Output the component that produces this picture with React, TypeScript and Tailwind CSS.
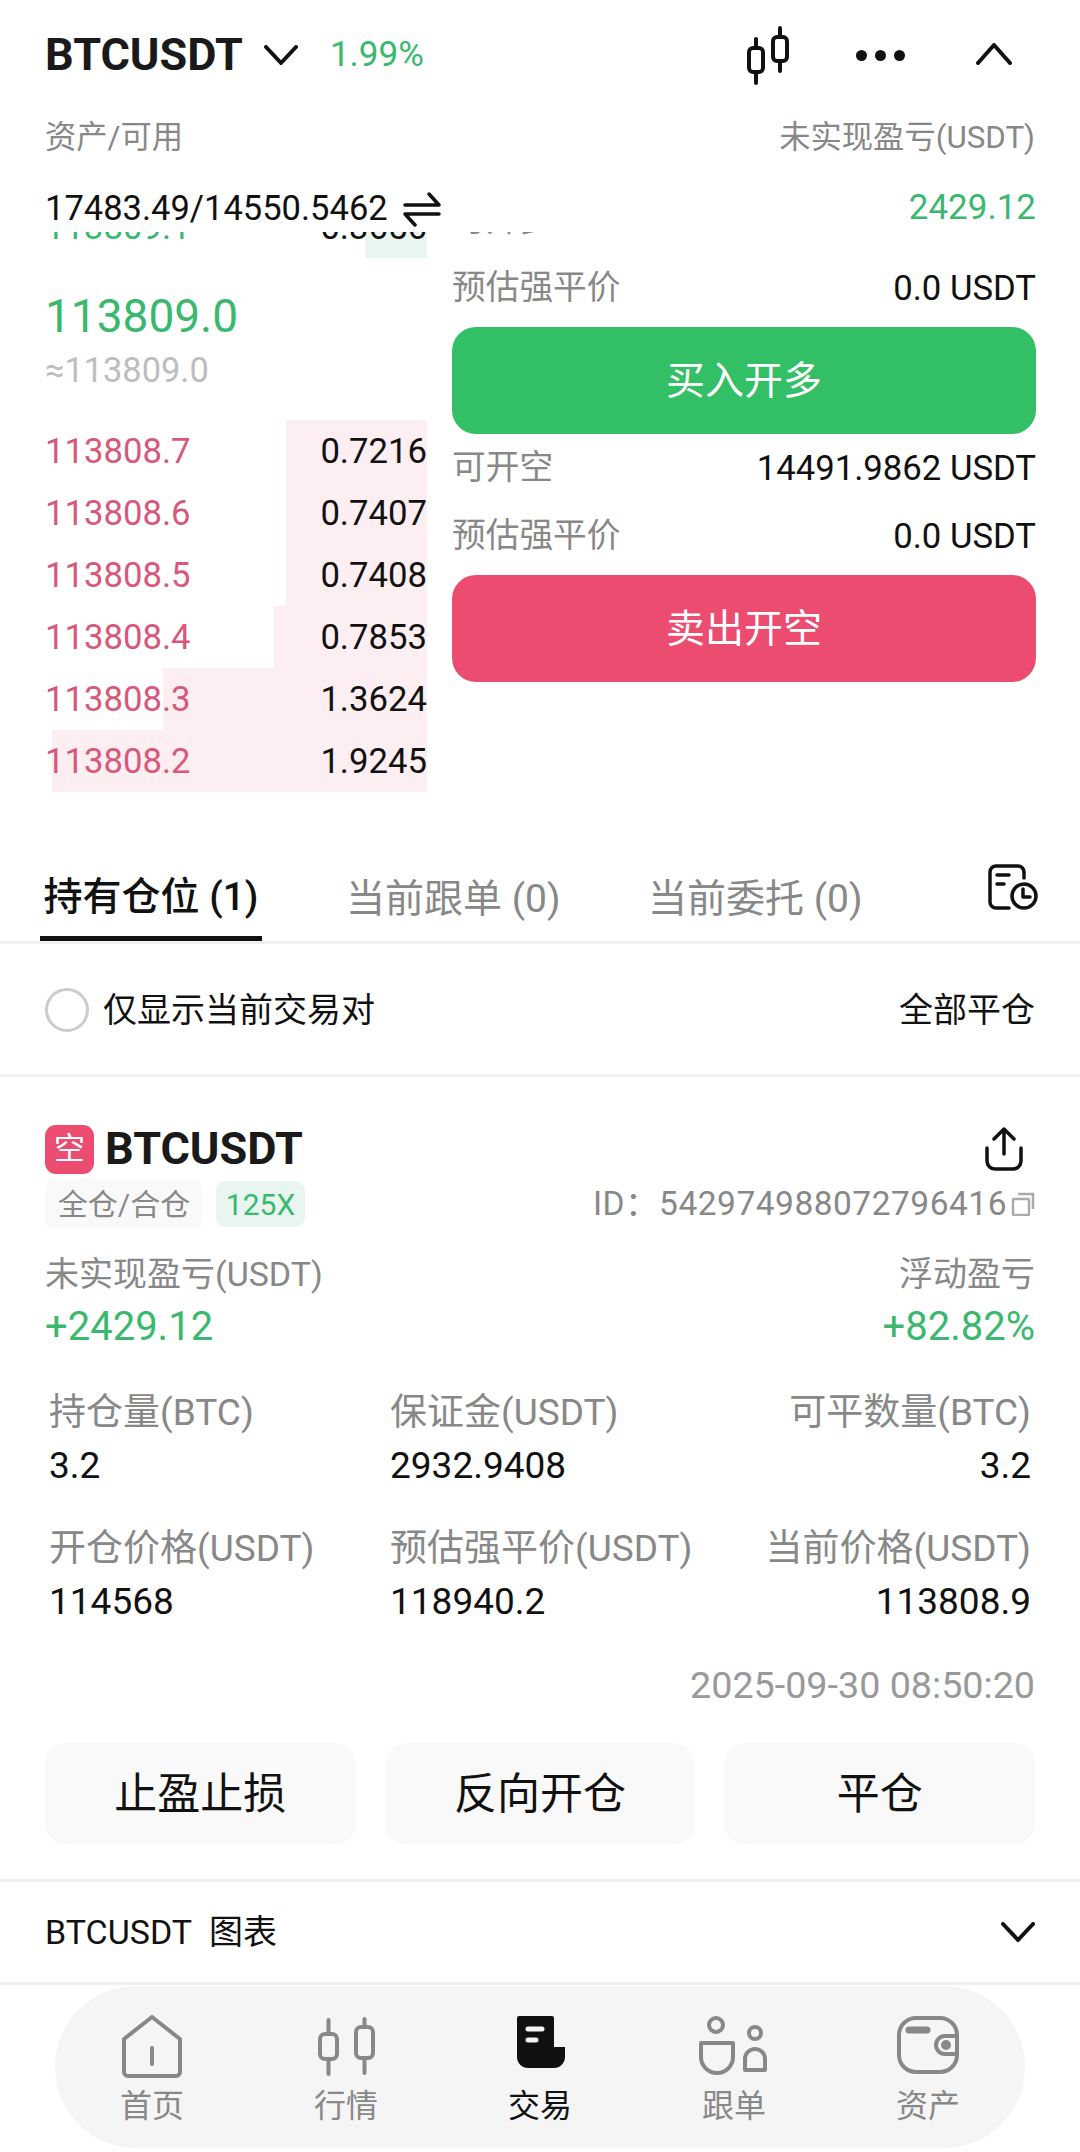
const asks = [
  { price: '113808.7', size: '0.7216', bar: 141 },
  { price: '113808.6', size: '0.7407', bar: 141 },
  { price: '113808.5', size: '0.7408', bar: 141 },
  { price: '113808.4', size: '0.7853', bar: 153 },
  { price: '113808.3', size: '1.3624', bar: 264 },
  { price: '113808.2', size: '1.9245', bar: 375 },
];

const stats = [
  { label: '持仓量(BTC)', value: '3.2' },
  { label: '保证金(USDT)', value: '2932.9408' },
  { label: '可平数量(BTC)', value: '3.2', right: true },
  { label: '开仓价格(USDT)', value: '114568' },
  { label: '预估强平价(USDT)', value: '118940.2' },
  { label: '当前价格(USDT)', value: '113808.9', right: true },
];

function Candles() {
  return (
    <svg width="46" height="60" viewBox="0 0 46 60" fill="none" stroke="#111" strokeWidth="4" strokeLinecap="round">
      <rect x="4" y="23" width="14" height="24" rx="4" />
      <path d="M11 14v9M11 47v11" />
      <rect x="28" y="12" width="14" height="24" rx="4" />
      <path d="M35 3v9M35 36v10" />
    </svg>
  );
}

function NavHome() {
  return (
    <svg width="62" height="64" viewBox="0 0 62 64" fill="none" stroke="#888" strokeWidth="4" strokeLinejoin="round" strokeLinecap="round">
      <path d="M3 24 L31 2 L59 24 V57 a4 4 0 0 1-4 4 H7 a4 4 0 0 1-4-4 Z" />
      <path d="M31 33v16" />
    </svg>
  );
}

function NavCandles() {
  return (
    <svg width="62" height="64" viewBox="0 0 62 64" fill="none" stroke="#888" strokeWidth="4" strokeLinecap="round">
      <rect x="5" y="19" width="17" height="25" rx="5" />
      <path d="M13.5 5v14M13.5 44v15" />
      <rect x="41" y="12" width="17" height="31" rx="5" />
      <path d="M49.5 4v8M49.5 43v15" />
    </svg>
  );
}

function NavTrade() {
  return (
    <svg width="52" height="54" viewBox="0 0 52 54" fill="none">
      <path d="M3 3 a2 2 0 0 1 2-2 H38 a2 2 0 0 1 2 2 V32 H51 V42 a11 11 0 0 1-11 11 H14 a11 11 0 0 1-11-11 Z" fill="#111" />
      <path d="M14 14h14M14 25h8" stroke="#f5f5f5" strokeWidth="5" strokeLinecap="round" />
    </svg>
  );
}

function NavFollow() {
  return (
    <svg width="72" height="62" viewBox="0 0 72 62" fill="none" stroke="#888" strokeWidth="4">
      <circle cx="18" cy="10" r="7" />
      <path d="M3 28 H35 V42 a16 16 0 0 1-32 0 Z" strokeLinejoin="round" />
      <circle cx="57" cy="18" r="6" />
      <path d="M47 55 V44 a10 10 0 0 1 20 0 V55 Z" strokeLinejoin="round" />
    </svg>
  );
}

function NavWallet() {
  return (
    <svg width="64" height="60" viewBox="0 0 64 60" fill="none" stroke="#888" strokeWidth="4">
      <rect x="3" y="3" width="58" height="54" rx="17" />
      <path d="M13 15h18" strokeWidth="7" strokeLinecap="round" />
      <path d="M61 21 H49 a9 9 0 0 0 0 18 H61" />
      <circle cx="50" cy="30" r="3" fill="#888" />
    </svg>
  );
}

const nav = [
  { label: '首页', icon: <NavHome /> },
  { label: '行情', icon: <NavCandles /> },
  { label: '交易', icon: <NavTrade />, active: true },
  { label: '跟单', icon: <NavFollow /> },
  { label: '资产', icon: <NavWallet /> },
];

function InfoRow({ label, value }: { label: string; value?: string }) {
  return (
    <div className="flex h-[68px] items-center justify-between">
      <span className="text-[33.7px] text-[#888888]">{label}</span>
      {value && <span className="text-[34.7px] text-[#111111]">{value}</span>}
    </div>
  );
}

export default function App() {
  return (
    <div className="h-[2152px] w-[1080px] overflow-hidden bg-white text-[#111111] [font-family:Roboto,'Noto_Sans_CJK_SC',sans-serif]">
      {/* header */}
      <div className="flex h-[110px] items-center pl-[45px]">
        <span className="text-[45px] font-bold text-[#1a1a1a]">BTCUSDT</span>
        <svg className="ml-[21px]" width="34" height="20" viewBox="0 0 34 20" fill="none" stroke="#111" strokeWidth="4" strokeLinecap="round" strokeLinejoin="round">
          <path d="M2 2 L17 18 L32 2" />
        </svg>
        <span className="ml-[32px] text-[35px] text-[#3ab86e]">1.99%</span>
        <div className="ml-auto mr-[68px] flex items-center">
          <Candles />
          <div className="ml-[65px] flex gap-[8px]">
            <span className="size-[11px] rounded-full bg-[#111111]" />
            <span className="size-[11px] rounded-full bg-[#111111]" />
            <span className="size-[11px] rounded-full bg-[#111111]" />
          </div>
          <svg className="ml-[71px] mt-[-2px]" width="36" height="22" viewBox="0 0 36 22" fill="none" stroke="#111" strokeWidth="4" strokeLinecap="round" strokeLinejoin="round">
            <path d="M2 20 L18 2 L34 20" />
          </svg>
        </div>
      </div>

      <div className="flex h-[56px] items-center justify-between px-[45px] text-[31.3px] text-[#888888]">
        <span>资产/可用</span>
        <span>未实现盈亏(USDT)</span>
      </div>
      <div className="mt-[12px] flex h-[54px] items-start justify-between pl-[45px] pr-[44px] leading-[60px]">
        <div className="flex items-center text-[34.5px]">
          <span>17483.49/14550.5462</span>
          <svg className="ml-[15px] mt-[2px]" width="38" height="36" viewBox="0 0 38 36" fill="none" stroke="#111" strokeWidth="3.5" strokeLinecap="round" strokeLinejoin="round">
            <path d="M2 14 H36 L26 3" />
            <path d="M36 23 H2 L12 34" />
          </svg>
        </div>
        <span className="text-[35px] text-[#3ab86e]">2429.12</span>
      </div>

      {/* order book and order form, scrolled under the header */}
      <div className="flex h-[586px] overflow-hidden pl-[45px] pr-[44px]">
        <div className="-mt-[36px] w-[382px] shrink-0">
          <div className="relative flex h-[62px] items-center justify-between text-[34.7px]">
            <div className="absolute inset-y-0 right-0 w-[62px] bg-[#e8f6ef]" />
            <span className="relative text-[#3ab86e]">113809.1</span>
            <span className="relative">0.3656</span>
          </div>
          <div className="flex h-[162px] flex-col pt-[28px]">
            <div className="flex h-[60px] items-center text-[46px] text-[#3ab86e]">113809.0</div>
            <div className="flex h-[50px] items-center text-[34.4px] text-[#bdbdbd]">≈113809.0</div>
          </div>
          {asks.map((row) => (
            <div key={row.price} className="relative flex h-[62px] items-center justify-between text-[34.7px]">
              <div className="absolute inset-y-0 right-0 bg-[#fdeef1]" style={{ width: row.bar }} />
              <span className="relative text-[#d8587c]">{row.price}</span>
              <span className="relative">{row.size}</span>
            </div>
          ))}
        </div>

        <div className="-mt-[46px] ml-[25px] flex-1">
          <InfoRow label="可开多" />
          <InfoRow label="预估强平价" value="0.0 USDT" />
          <button className="mt-[5px] flex h-[107px] w-full items-center justify-center rounded-[24px] bg-[#33bf66] pt-[2px] text-[39px] text-white">
            买入开多
          </button>
          <InfoRow label="可开空" value="14491.9862 USDT" />
          <InfoRow label="预估强平价" value="0.0 USDT" />
          <button className="mt-[5px] flex h-[107px] w-full items-center justify-center rounded-[24px] bg-[#ec4c70] pt-[2px] text-[39px] text-white">
            卖出开空
          </button>
        </div>
      </div>

      {/* tabs */}
      <div className="mt-[40px] flex h-[86px] items-start border-b-[3px] border-[#f0f0f0] pl-[40px]">
        <div className="w-[306px]">
          <div className="flex h-[83px] w-[222px] items-center justify-center border-b-[5px] border-[#111111] text-[39px] font-medium">
            持有仓位 (1)
          </div>
        </div>
        <div className="flex h-[83px] w-[302px] items-center text-[39px] text-[#888888]">当前跟单 (0)</div>
        <div className="flex h-[83px] items-center text-[39px] text-[#888888]">当前委托 (0)</div>
        <svg className="ml-auto mr-[42px] mt-[6px]" width="50" height="46" viewBox="0 0 50 46" fill="none" stroke="#111" strokeWidth="3.5" strokeLinecap="round" strokeLinejoin="round">
          <path d="M36 14 V8 a6 6 0 0 0-6-6 H8 a6 6 0 0 0-6 6 V38 a6 6 0 0 0 6 6 H21" />
          <path d="M9 11h12M9 20h7" />
          <circle cx="36" cy="32" r="12" />
          <path d="M35 25v8h7" />
        </svg>
      </div>

      <div className="flex h-[133px] items-center justify-between border-b-[3px] border-[#f0f0f0] px-[45px] pt-[2px]">
        <div className="flex items-center">
          <span className="size-[44px] rounded-full border-[3px] border-[#cccccc]" />
          <span className="ml-[14px] text-[34px]">仅显示当前交易对</span>
        </div>
        <span className="text-[34px]">全部平仓</span>
      </div>

      {/* position card */}
      <div className="px-[45px] pt-[47px]">
        <div className="flex h-[50px] items-center justify-between">
          <div className="flex items-center">
            <span className="flex size-[49px] items-center justify-center rounded-[11px] bg-[#ec4c70] text-[31px] text-white">空</span>
            <span className="ml-[11px] text-[45px] font-bold text-[#1a1a1a]">BTCUSDT</span>
          </div>
          <svg className="mr-[12px]" width="38" height="44" viewBox="0 0 38 44" fill="none" stroke="#111" strokeWidth="3.5" strokeLinecap="round" strokeLinejoin="round">
            <path d="M19 27 V3 M9 12 L19 2 L29 12" />
            <path d="M2 21 V34 a8 8 0 0 0 8 8 H28 a8 8 0 0 0 8-8 V21" />
          </svg>
        </div>
        <div className="mt-[5px] flex h-[50px] items-center">
          <span className="flex h-[50px] w-[158px] items-center justify-center rounded-[10px] bg-[#f9f9f9] text-[30px] text-[#888888]">全仓/合仓</span>
          <span className="ml-[13px] flex h-[46px] w-[89px] items-center justify-center rounded-[10px] bg-[#e8f6ef] text-[30px] text-[#3ab86e]">125X</span>
          <span className="ml-auto text-[33.5px] tracking-[0.5px] text-[#888888]">ID：542974988072796416</span>
          <svg className="ml-[4px]" width="24" height="24" viewBox="0 0 24 24" fill="none" stroke="#aaa" strokeWidth="2.5">
            <rect x="2" y="7" width="16" height="16" rx="1" />
            <path d="M7 2 H22 V17" />
          </svg>
        </div>

        <div className="mt-[20px] flex justify-between">
          <div>
            <div className="flex h-[50px] items-center text-[34px] text-[#888888]">未实现盈亏(USDT)</div>
            <div className="mt-[2px] flex h-[52px] items-center text-[40px] text-[#3ab86e]">+2429.12</div>
          </div>
          <div className="text-right">
            <div className="flex h-[50px] items-center justify-end text-[34px] text-[#888888]">浮动盈亏</div>
            <div className="mt-[2px] flex h-[52px] items-center justify-end text-[40px] text-[#3ab86e]">+82.82%</div>
          </div>
        </div>

        <div className="mt-[35px] grid grid-cols-[341px_1fr_1fr] gap-y-[33px] px-[4px]">
          {stats.map((stat) => (
            <div key={stat.label} className={stat.right ? 'text-right' : ''}>
              <div className="h-[50px] whitespace-nowrap text-[37px] leading-[50px] text-[#888888]">{stat.label}</div>
              <div className="mt-[3px] h-[50px] text-[37px] leading-[50px]">{stat.value}</div>
            </div>
          ))}
        </div>

        <div className="mt-[33px] h-[50px] text-right text-[37.7px] leading-[50px] text-[#999999]">2025-09-30 08:50:20</div>

        <div className="mt-[33px] grid grid-cols-3 gap-[29px]">
          {['止盈止损', '反向开仓', '平仓'].map((label) => (
            <button key={label} className="flex h-[102px] items-center justify-center rounded-[22px] bg-[#f9f9f9] text-[43px] text-[#111111]">
              {label}
            </button>
          ))}
        </div>
      </div>

      <div className="mt-[34px] flex h-[106px] items-center justify-between border-y-[3px] border-[#f0f0f0] px-[45px]">
        <span className="text-[34px]">BTCUSDT&nbsp;&nbsp;图表</span>
        <svg width="34" height="20" viewBox="0 0 34 20" fill="none" stroke="#111" strokeWidth="4" strokeLinecap="round" strokeLinejoin="round">
          <path d="M2 2 L17 18 L32 2" />
        </svg>
      </div>

      {/* bottom nav */}
      <div className="mx-[55px] mt-[1px] grid h-[162px] grid-cols-5 rounded-full bg-[#f5f5f5] pt-[29px]">
        {nav.map((item) => (
          <div key={item.label} className="flex flex-col items-center">
            <div className="flex h-[64px] items-start justify-center">{item.icon}</div>
            <span className={`mt-[5px] text-[32px] leading-[44px] ${item.active ? 'text-[#111111]' : 'text-[#888888]'}`}>{item.label}</span>
          </div>
        ))}
      </div>
    </div>
  );
}
